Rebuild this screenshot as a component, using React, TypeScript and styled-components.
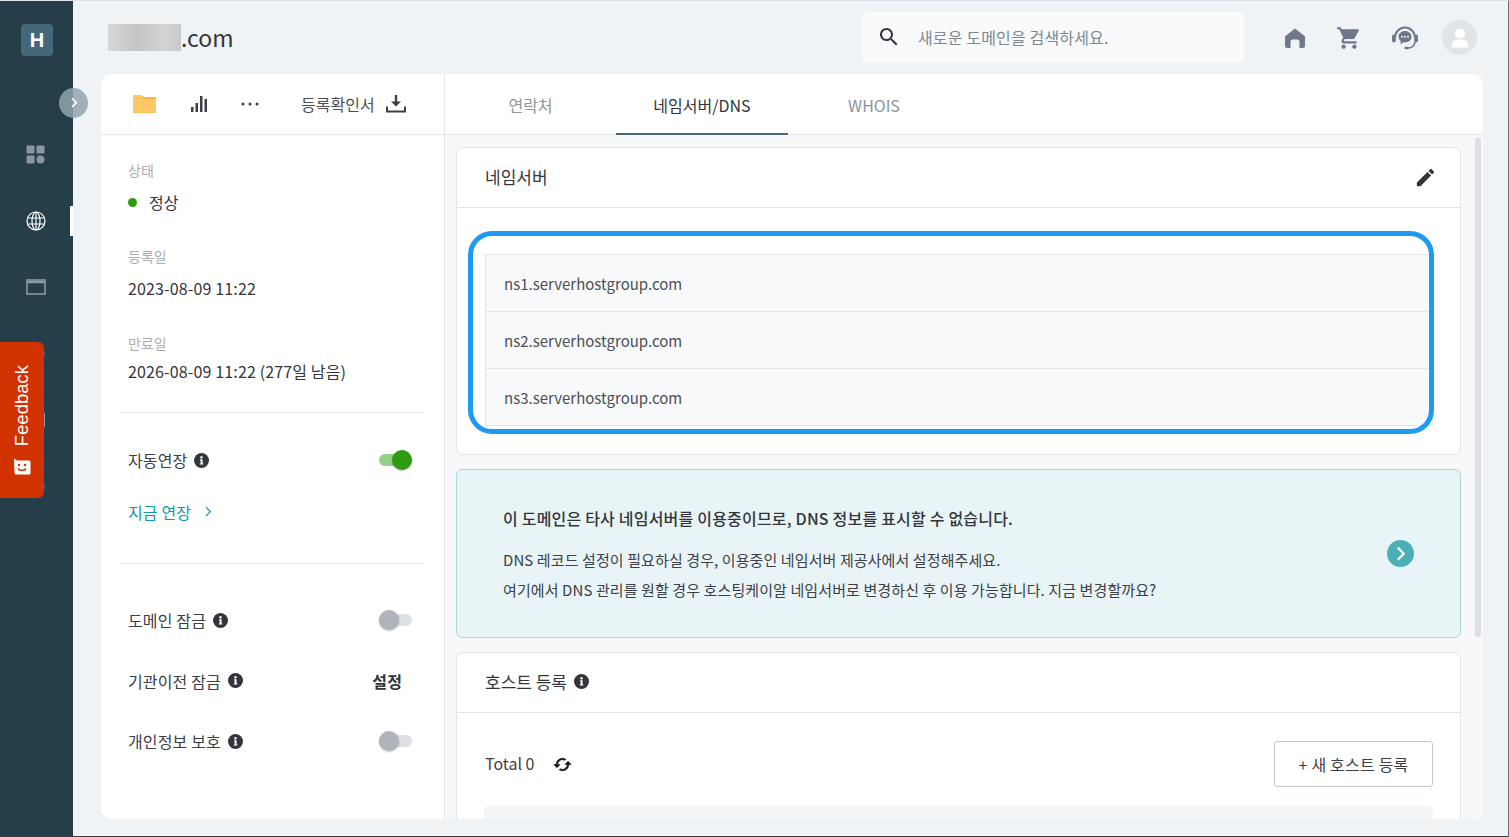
import React from 'react';
import styled, { createGlobalStyle } from 'styled-components';

const Global = createGlobalStyle`
  html, body { margin: 0; padding: 0; height: 100%; overflow: hidden; }
  body { font-family: "Noto Sans CJK KR", "Noto Sans", sans-serif; color: #32363c; background: #eff3f6; }
  * { box-sizing: border-box; }
`;

const Page = styled.div`
  position: relative; display: flex; width: 1509px; height: 837px; overflow: hidden;
  border-top: 1px solid #dfe3ea; border-right: 1px solid #6f7278; border-bottom: 1px solid #3a3d42;
  background: #eff3f6;
`;
const Rail = styled.nav`
  position: relative; flex: 0 0 73px; display: flex; flex-direction: column; align-items: center; background: #263d4a;
`;
const LogoMark = styled.div`
  width: 32px; height: 32px; margin: 23px 0 0 1px; border-radius: 4px; background: #44687a; color: #fff;
  display: flex; align-items: center; justify-content: center; font: 700 20px "Liberation Sans", sans-serif;
`;
const RailList = styled.div`
  display: flex; flex-direction: column; align-items: center; margin-top: 65px; width: 100%;
`;
const RailItem = styled.div<{ $active?: boolean }>`
  width: 100%; height: 66.5px; display: flex; align-items: center; justify-content: center; padding-right: 2px;
  position: relative; color: ${p => (p.$active ? '#fff' : '#8b979f')};
  &::after {
    content: ''; display: ${p => (p.$active ? 'block' : 'none')};
    position: absolute; right: 0; top: 18px; width: 3px; height: 30px; background: #fff;
  }
`;
const Expand = styled.div`
  position: absolute; left: 59px; top: 87px; width: 29px; height: 30px; border-radius: 50%;
  background: linear-gradient(90deg, #7f96a1 14px, #9fb0b9 14px); color: #fff; display: flex; align-items: center; justify-content: center;
`;
const Feedback = styled.div`
  position: absolute; left: 0; top: 341px; width: 44px; height: 156px; border-radius: 0 6px 6px 0;
  background: #d13200; color: #fff; display: flex; flex-direction: column-reverse; align-items: center;
  justify-content: flex-start; gap: 12px; padding: 22px 0 23px 0;
`;
const FeedbackText = styled.span`
  writing-mode: vertical-rl; transform: rotate(180deg); font: 400 18.5px/1 "Liberation Sans", sans-serif;
`;
const Main = styled.main`
  flex: 1; min-width: 0; display: flex; flex-direction: column; padding: 0 25px 17px 28px;
`;
const Header = styled.header`
  height: 73px; flex: none; display: flex; align-items: center; padding: 0 6px 0 7px;
`;
const DomainName = styled.h1`
  margin: 0; display: flex; align-items: center; font-size: 23px; font-weight: 400; color: #32363c; line-height: 27px; flex: 1;
`;
const Blur = styled.span`
  display: block; width: 73px; height: 27px; background: linear-gradient(90deg, #d6d7d9, #c3c5c7 40%, #d2d3d5 75%, #c9cacc);
`;
const SearchBox = styled.div`
  width: 382px; height: 51px; margin: -1px 39px 0 0; border-radius: 6px; background: #f8fafc;
  display: flex; align-items: center; gap: 17px; padding-left: 15px; color: #32363c;
`;
const SearchHint = styled.span` font-size: 16px; letter-spacing: .15px; color: #80868f; `;
const Tools = styled.div` display: flex; align-items: center; color: #6f7888; `;
const ToolIcon = styled.span<{ $w: number }>` display: flex; justify-content: center; width: ${p => p.$w}px; `;
const Avatar = styled.div`
  width: 35px; height: 35px; border-radius: 50%; margin-left: 23px; background: #e1e5ea; color: #fff;
  display: flex; align-items: center; justify-content: center;
`;
const Card = styled.section`
  flex: 1; min-height: 0; display: flex; background: #fff; border-radius: 10px; overflow: hidden;
`;
const Side = styled.aside`
  flex: 0 0 344px; display: flex; flex-direction: column; border-right: 1px solid #e3e7ec;
`;
const SideBar = styled.div`
  height: 61px; flex: none; display: flex; align-items: center; border-bottom: 1px solid #e3e7ec; padding: 0 0 0 32px; color: #32363c;
`;
const SideAction = styled.span<{ $w: number; $shift?: number }>`
  width: ${p => p.$w}px; display: flex; align-items: center; flex: none; padding-left: ${p => p.$shift ?? 0}px;
`;
const CertLink = styled.span`
  display: flex; align-items: center; gap: 11px; font-size: 16px; color: #4a4f56; margin-left: 8px;
`;
const SideBody = styled.div` padding: 23px 19px 0 18px; display: flex; flex-direction: column; `;
const Field = styled.div<{ $h: number }>`
  height: ${p => p.$h}px; padding-left: 9px; display: flex; flex-direction: column;
`;
const FieldLabel = styled.span` font-size: 14px; line-height: 24px; color: #a9afb7; `;
const FieldValue = styled.span<{ $gap?: number }>`
  font-size: 16px; line-height: 24px; letter-spacing: .14px; color: #32363c; margin-top: ${p => p.$gap ?? 8}px; display: flex; align-items: center;
`;
const Dot = styled.i`
  width: 9px; height: 9px; border-radius: 50%; background: #2f9a12; margin-right: 12px; display: block;
`;
const Divider = styled.hr` width: 100%; margin: 0; border: 0; border-top: 1px solid #e9ecf1; `;
const OptionStack = styled.div<{ $top: number }>` display: flex; flex-direction: column; padding-top: ${p => p.$top}px; `;
const OptionRow = styled.div<{ $h?: number }>`
  height: ${p => p.$h ?? 60}px; display: flex; align-items: center; justify-content: space-between; padding: 0 13px 0 9px;
  font-size: 16px; letter-spacing: .14px; color: #3c4046;
`;
const OptionLabel = styled.span` display: flex; align-items: center; gap: 7px; `;
const InfoDot = styled.span`
  width: 15px; height: 15px; border-radius: 50%; background: #32363c; color: #fff; display: flex; align-items: center; justify-content: center;
`;
const SwitchTrack = styled.span<{ $on?: boolean }>`
  position: relative; display: block; width: 33px; height: 12px; border-radius: 6px; background: ${p => (p.$on ? '#96d087' : '#dce0e5')};
  &::after {
    content: ''; position: absolute; top: -4px; ${p => (p.$on ? 'right: 0' : 'left: 0')}; width: 20px; height: 20px; border-radius: 50%;
    background: ${p => (p.$on ? '#2f9a12' : '#b0b3b9')}; box-shadow: 0 1px 2px rgba(0,0,0,.25);
  }
`;
const RenewLink = styled.div`
  display: flex; align-items: center; gap: 13px; padding-left: 9px; font-size: 16px; letter-spacing: .14px; color: #1497a6; height: 30px; margin: 7px 0 36px;
`;
const SetButton = styled.span` font-size: 16px; font-weight: 700; margin-right: 10px; color: #32363c; `;
const Right = styled.div` flex: 1; min-width: 0; display: flex; flex-direction: column; `;
const Tabs = styled.div`
  height: 61px; flex: none; display: flex; border-bottom: 1px solid #e3e7ec;
`;
const Tab = styled.div<{ $on?: boolean; $w: number }>`
  width: ${p => p.$w}px; height: 61px; display: flex; align-items: center; justify-content: center; padding-top: 3px; font-size: 16px;
  color: ${p => (p.$on ? '#32363c' : '#8e949c')}; border-bottom: 2px solid ${p => (p.$on ? '#44687a' : 'transparent')};
`;
const Scroller = styled.div`
  flex: 1; min-height: 0; overflow: hidden; background: #f6f8fa; padding: 12px 22px 0 11px; position: relative; display: flex; flex-direction: column; gap: 14px;
`;
const ScrollThumb = styled.div`
  position: absolute; right: 2px; top: 2px; width: 6px; height: 500px; border-radius: 3px; background: #dde1e6;
`;
const Panel = styled.div`
  background: #fff; border: 1px solid #e1e5ea; border-radius: 7px; flex: none; position: relative;
`;
const OpenPanel = styled(Panel)` border-bottom: 0; border-radius: 7px 7px 0 0; flex: 1; min-height: 0; overflow: hidden; `;
const PanelHead = styled.div`
  height: 60px; display: flex; align-items: center; justify-content: space-between; padding: 0 23px 0 28px; border-bottom: 1px solid #e1e5ea;
  font-size: 17px; color: #32363c;
`;
const PanelTitle = styled.span` display: flex; align-items: center; gap: 7px; margin-top: -2px; `;
const NsList = styled.div`
  margin: 46px 27px 28px 28px; border: 1px solid #e3e7ec; background: #f8f9fb;
`;
const NsRow = styled.div`
  height: 57px; display: flex; align-items: center; padding-left: 18px; font-size: 15px; color: #4a4f56; border-top: 1px solid #e3e7ec;
  &:first-child { border-top: 0; height: 56px; }
`;
const Highlight = styled.div`
  position: absolute; left: 11px; top: 83px; width: 966px; height: 203px; border: 5px solid #1d9bf0; border-radius: 24px; pointer-events: none;
`;
const Notice = styled.div`
  flex: none; height: 169px; background: #e9f4f6; border: 1px solid #a6dad9; border-radius: 6px; position: relative; padding: 33px 46px 0;
  display: flex; flex-direction: column; color: #32363c;
`;
const NoticeTitle = styled.strong` font-size: 16px; font-weight: 500; letter-spacing: .2px; line-height: 30px; margin-bottom: 12px; `;
const NoticeLine = styled.p` margin: 0; font-size: 15px; letter-spacing: .1px; line-height: 30px; color: #3c4046; `;
const NoticeGo = styled.span`
  position: absolute; right: 46px; top: 70px; width: 27px; height: 27px; border-radius: 50%; background: #4ab0b6; color: #fff;
  display: flex; align-items: center; justify-content: center;
`;
const TotalRow = styled.div`
  height: 93px; display: flex; align-items: center; justify-content: space-between; padding: 9px 27px 0 28px;
`;
const Total = styled.span` display: flex; align-items: center; gap: 19px; font-size: 16px; color: #3c4046; padding-bottom: 2px; `;
const SyncIcon = styled.svg` display: block; margin-top: 2px; `;
const AddButton = styled.button`
  width: 159px; height: 46px; background: #fff; border: 1px solid #c2c8d0; border-radius: 3px; font: inherit; font-size: 16px; letter-spacing: .2px; color: #3c4046;
`;
const TableHead = styled.div` height: 40px; margin: 0 27px; background: #f4f5f7; border-radius: 4px 4px 0 0; `;

const Ico = ({ s, d, vb = 24 }: { s: number; d: string; vb?: number }) => (
  <svg width={s} height={s} viewBox={`0 0 ${vb} ${vb}`} fill="currentColor"><path d={d} /></svg>
);
const Info = () => (
  <InfoDot>
    <svg width="11" height="11" viewBox="0 0 11 11" fill="#fff"><circle cx="5.5" cy="2.2" r="1.2" /><path d="M4 4.2h2.6v4.4h.8v1H3.800v-1h.8V5.200H4z" /></svg>
  </InfoDot>
);
const Chevron = ({ s = 10, w = 1.5 }: { s?: number; w?: number }) => (
  <svg width={s} height={s * 1.4} viewBox="0 0 10 14" fill="none" stroke="currentColor" strokeWidth={w}><path d="M2.5 1.5 8 7l-5.5 5.5" /></svg>
);

export default function App() {
  return (
    <Page>
      <Global />
      <Rail>
        <LogoMark>H</LogoMark>
        <RailList>
          <RailItem>
            <svg width="19" height="19" viewBox="0 0 19 19" fill="currentColor">
              <rect x="0.5" y="0.5" width="8" height="8" rx="1" /><rect x="10.500" y="0.5" width="8" height="8" rx="1" /><rect x="0.5" y="10.5" width="8" height="8" rx="1" /><circle cx="14.5" cy="14.5" r="4" />
            </svg>
          </RailItem>
          <RailItem $active>
            <svg width="20" height="20" viewBox="0 0 20 20" fill="none" stroke="#fff" strokeWidth="1.2">
              <circle cx="10" cy="10" r="9" /><ellipse cx="10" cy="10" rx="4" ry="9" /><path d="M1.800 7h16.400M1.800 13h16.400M10 1v18" />
            </svg>
          </RailItem>
          <RailItem>
            <svg width="20" height="16" viewBox="0 0 20 16" fill="none" stroke="currentColor"><rect x="1" y="1" width="18" height="14" strokeWidth="1.600" /><path d="M1 3h18" strokeWidth="2.500" /></svg>
          </RailItem>
          <RailItem><svg width="19" height="18" viewBox="0 0 19 18" fill="currentColor"><circle cx="9.500" cy="9" r="9" /></svg></RailItem>
          <RailItem><svg width="19" height="18" viewBox="0 0 19 18" fill="currentColor"><rect y="1" width="19" height="16" rx="2" /></svg></RailItem>
          <RailItem><svg width="19" height="18" viewBox="0 0 19 18" fill="currentColor"><circle cx="9.500" cy="9" r="9" /></svg></RailItem>
        </RailList>
        <Expand><Chevron s={8} w={2} /></Expand>
        <Feedback>
          <svg width="18" height="17" viewBox="0 0 18 17">
            <path fill="#fff" d="M1 0.500 4 2.500h12a1.500 1.500 0 0 1 1.500 1.500v11a1.500 1.500 0 0 1-1.500 1.500H3A1.500 1.500 0 0 1 1.500 15z" />
            <circle cx="6" cy="7" r="1.200" fill="#d13200" /><circle cx="12" cy="7" r="1.200" fill="#d13200" />
            <path d="M5 10.500c1.500 2.500 6.500 2.500 8 0" fill="none" stroke="#d13200" strokeWidth="1.500" />
          </svg>
          <FeedbackText>Feedback</FeedbackText>
        </Feedback>
      </Rail>
      <Main>
        <Header>
          <DomainName><Blur />.com</DomainName>
          <SearchBox>
            <Ico s={24} d="M15.5 14h-.79l-.28-.27C15.41 12.59 16 11.110 16 9.500 16 5.910 13.090 3 9.500 3S3 5.910 3 9.500 5.910 16 9.500 16c1.610 0 3.090-.59 4.230-1.570l.27.28v.79l5 4.990L20.490 19l-4.990-5zm-6 0C7.010 14 5 11.990 5 9.500S7.010 5 9.500 5 14 7.010 14 9.500 11.990 14 9.500 14z" />
            <SearchHint>새로운 도메인을 검색하세요.</SearchHint>
          </SearchBox>
          <Tools>
            <ToolIcon $w={24}>
              <svg width="22" height="22" viewBox="0 0 22 22" fill="currentColor"><path d="M11 1.500 20.500 9a1.500 1.500 0 0 1 .5 1.200V19a2 2 0 0 1-2 2h-3.500v-6a2.500 2.500 0 0 0-2.500-2.500H9A2.500 2.500 0 0 0 6.500 15v6H3a2 2 0 0 1-2-2v-8.800A1.500 1.500 0 0 1 1.500 9z" /></svg>
            </ToolIcon>
            <ToolIcon $w={84}>
              <Ico s={26} d="M7 18c-1.100 0-1.990.9-1.990 2S5.900 22 7 22s2-.9 2-2-.9-2-2-2zM1 2v2h2l3.600 7.590-1.350 2.450c-.16.28-.25.61-.25.960 0 1.100.9 2 2 2h12v-2H7.420c-.14 0-.25-.11-.25-.25l.03-.12.9-1.630h7.450c.75 0 1.410-.41 1.750-1.030l3.580-6.470c.08-.14.12-.31.12-.48 0-.55-.45-1-1-1H5.210l-.94-2H1zm16 16c-1.100 0-1.990.9-1.990 2s.89 2 1.990 2 2-.9 2-2-.9-2-2-2z" />
            </ToolIcon>
            <ToolIcon $w={28}>
              <svg width="28" height="24" viewBox="0 0 28 24" fill="none" stroke="currentColor">
                <path d="M4 11.500C4 6 8.500 1.500 14 1.500S24 6 24 11.500" strokeWidth="2" />
                <rect x="1" y="8.500" width="3.800" height="8" rx="1.900" fill="currentColor" stroke="none" /><rect x="23.200" y="8.500" width="3.800" height="8" rx="1.900" fill="currentColor" stroke="none" />
                <path d="M24 16c-.5 3.500-3 6-7 6" strokeWidth="1.600" />
                <rect x="13.500" y="20.800" width="4.500" height="2.400" rx="1.200" fill="currentColor" stroke="none" />
                <path d="M14 5c3.800 0 6.500 2.500 6.500 5.800s-2.700 5.700-6.500 5.700c-.6 0-1.200 0-1.800-.2L9.500 18.500l.3-3.200C8.400 14.200 7.500 12.600 7.500 10.800 7.500 7.500 10.200 5 14 5z" fill="currentColor" stroke="none" />
                <circle cx="11" cy="10.800" r="1" fill="#eff3f6" stroke="none" /><circle cx="14" cy="10.800" r="1" fill="#eff3f6" stroke="none" /><circle cx="17" cy="10.800" r="1" fill="#eff3f6" stroke="none" />
              </svg>
            </ToolIcon>
            <Avatar>
              <svg width="18" height="20" viewBox="0 0 18 20" fill="#fff"><circle cx="9" cy="5.500" r="5" /><path d="M1 19.500v-3.500c0-2.500 3-4.500 8-4.500s8 2 8 4.500v3.500z" /></svg>
            </Avatar>
          </Tools>
        </Header>
        <Card>
          <Side>
            <SideBar>
              <SideAction $w={57}>
                <svg width="23" height="20" viewBox="0 0 24 20"><path fill="#f6a623" d="M0 2a1.500 1.500 0 0 1 1.500-1.500h7L11 3h11.500A1.500 1.500 0 0 1 24 4.500V18a1.500 1.500 0 0 1-1.500 1.500h-21A1.500 1.500 0 0 1 0 18z" /><path fill="#ffc766" d="M0 4.500h24V18a1 1 0 0 1-1 1H1a1 1 0 0 1-1-1z" /><path fill="#ffc766" d="M0 2a1.500 1.500 0 0 1 1.500-1.500h7L11 4.500H0z" /></svg>
              </SideAction>
              <SideAction $w={51} $shift={1}>
                <svg width="16" height="16" viewBox="0 0 16 16" fill="#3c4046"><rect x="0" y="11" width="2.500" height="5" /><rect x="4.500" y="7" width="2.500" height="9" /><rect x="9" y="0" width="2.500" height="16" /><rect x="13.500" y="3" width="2.500" height="13" /></svg>
              </SideAction>
              <SideAction $w={52}>
                <svg width="18" height="4" viewBox="0 0 18 4" fill="#3c4046"><circle cx="2" cy="2" r="1.500" /><circle cx="9" cy="2" r="1.500" /><circle cx="16" cy="2" r="1.500" /></svg>
              </SideAction>
              <CertLink>
                등록확인서
                <svg width="20" height="18" viewBox="0 0 20 18" fill="#3c4046"><path d="M8.800 0h2.400v6.500H15L10 11.500 5 6.500h3.800z" /><path d="M1 11.500v5h18v-5" fill="none" stroke="#3c4046" strokeWidth="2" /></svg>
              </CertLink>
            </SideBar>
            <SideBody>
              <Field $h={86}>
                <FieldLabel>상태</FieldLabel>
                <FieldValue><Dot />정상</FieldValue>
              </Field>
              <Field $h={87}>
                <FieldLabel>등록일</FieldLabel>
                <FieldValue>2023-08-09 11:22</FieldValue>
              </Field>
              <Field $h={81}>
                <FieldLabel>만료일</FieldLabel>
                <FieldValue $gap={4}>2026-08-09 11:22 (277일 남음)</FieldValue>
              </Field>
              <Divider />
              <OptionStack $top={17}>
                <OptionRow>
                  <OptionLabel>자동연장 <Info /></OptionLabel>
                  <SwitchTrack $on />
                </OptionRow>
              </OptionStack>
              <RenewLink>지금 연장 <Chevron s={8} w={1.500} /></RenewLink>
              <Divider />
              <OptionStack $top={26}>
                <OptionRow>
                  <OptionLabel>도메인 잠금 <Info /></OptionLabel>
                  <SwitchTrack />
                </OptionRow>
                <OptionRow $h={61}>
                  <OptionLabel>기관이전 잠금 <Info /></OptionLabel>
                  <SetButton>설정</SetButton>
                </OptionRow>
                <OptionRow>
                  <OptionLabel>개인정보 보호 <Info /></OptionLabel>
                  <SwitchTrack />
                </OptionRow>
              </OptionStack>
            </SideBody>
          </Side>
          <Right>
            <Tabs>
              <Tab $w={171}>연락처</Tab>
              <Tab $w={172} $on>네임서버/DNS</Tab>
              <Tab $w={172}>WHOIS</Tab>
            </Tabs>
            <Scroller>
              <ScrollThumb />
              <Panel>
                <PanelHead>
                  <PanelTitle>네임서버</PanelTitle>
                  <Ico s={23} d="M3 17.250V21h3.750L17.810 9.940l-3.750-3.750L3 17.250zM20.710 7.040c.39-.39.39-1.020 0-1.410l-2.340-2.340c-.39-.39-1.020-.39-1.410 0l-1.830 1.830 3.750 3.750 1.830-1.830z" />
                </PanelHead>
                <NsList>
                  <NsRow>ns1.serverhostgroup.com</NsRow>
                  <NsRow>ns2.serverhostgroup.com</NsRow>
                  <NsRow>ns3.serverhostgroup.com</NsRow>
                </NsList>
                <Highlight />
              </Panel>
              <Notice>
                <NoticeTitle>이 도메인은 타사 네임서버를 이용중이므로, DNS 정보를 표시할 수 없습니다.</NoticeTitle>
                <NoticeLine>DNS 레코드 설정이 필요하실 경우, 이용중인 네임서버 제공사에서 설정해주세요.</NoticeLine>
                <NoticeLine>여기에서 DNS 관리를 원할 경우 호스팅케이알 네임서버로 변경하신 후 이용 가능합니다. 지금 변경할까요?</NoticeLine>
                <NoticeGo><Chevron s={11} w={2} /></NoticeGo>
              </Notice>
              <OpenPanel>
                <PanelHead>
                  <PanelTitle>호스트 등록 <Info /></PanelTitle>
                </PanelHead>
                <TotalRow>
                  <Total>
                    Total 0
                    <SyncIcon width="19" height="19" viewBox="0 0 24 24" fill="#111" stroke="#111" strokeWidth="0.7">
                      <path d="M19 8l-4 4h3c0 3.310-2.690 6-6 6-1.010 0-1.970-.25-2.800-.7l-1.460 1.460C8.970 19.540 10.430 20 12 20c4.420 0 8-3.580 8-8h3l-4-4zM6 12c0-3.310 2.690-6 6-6 1.010 0 1.970.25 2.800.7l1.460-1.460C15.030 4.460 13.570 4 12 4c-4.420 0-8 3.580-8 8H1l4 4 4-4H6z" />
                    </SyncIcon>
                  </Total>
                  <AddButton>+ 새 호스트 등록</AddButton>
                </TotalRow>
                <TableHead />
              </OpenPanel>
            </Scroller>
          </Right>
        </Card>
      </Main>
    </Page>
  );
}
